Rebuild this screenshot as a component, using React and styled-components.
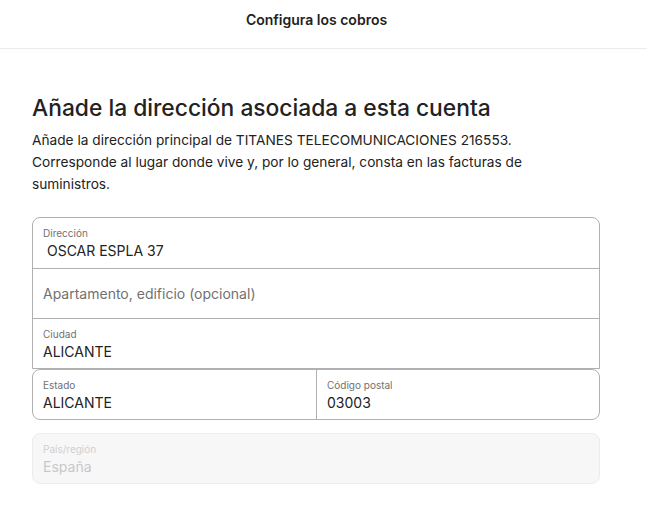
import styled, { createGlobalStyle } from 'styled-components';

const GlobalStyle = createGlobalStyle`
  body {
    margin: 0;
    background: #ffffff;
    font-family: Inter, "Noto Sans", sans-serif;
    color: #222222;
  }
`;

const Header = styled.header`
  height: 49px;
  display: flex;
  align-items: center;
  justify-content: center;
  border-bottom: 1px solid #ebebeb;
  font-size: 14px;
  font-weight: 600;
  padding: 0 14px 10px 0;
  box-sizing: border-box;
`;

const Main = styled.main`
  width: 568px;
  padding: 42px 32px 0 32px;
`;

const Title = styled.h1`
  margin: 0;
  font-size: 22.8px;
  font-weight: 500;
  line-height: 34px;
`;

const Lead = styled.p`
  margin: 4px 0 22px 0;
  font-size: 13.7px;
  line-height: 22px;
  color: #222222;
`;

const Group = styled.div`
  border: 1px solid #b0b0b0;
  border-radius: ${({ $bottom }) => ($bottom ? '8px' : '8px 8px 0 0')};
  display: ${({ $split }) => ($split ? 'grid' : 'block')};
  grid-template-columns: 1fr 1fr;
  overflow: hidden;
  & > * + * {
    ${({ $split }) =>
      $split ? 'border-left: 1px solid #b0b0b0;' : 'border-top: 1px solid #b0b0b0;'}
  }
`;

const Field = styled.div`
  height: ${({ $h }) => $h || 50}px;
  box-sizing: border-box;
  padding: ${({ $placeholder }) => ($placeholder ? '0 10px' : '8px 10px 0 10px')};
  display: flex;
  flex-direction: column;
  justify-content: ${({ $placeholder }) => ($placeholder ? 'center' : 'flex-start')};
`;

const Label = styled.span`
  font-size: 10px;
  line-height: 14px;
  color: ${({ $disabled }) => ($disabled ? '#d0d0d0' : '#717171')};
`;

const Value = styled.span`
  font-size: 14px;
  line-height: 22px;
  color: ${({ $disabled, $placeholder }) =>
    $disabled ? '#c8c8c8' : $placeholder ? '#717171' : '#222222'};
`;

const Disabled = styled.div`
  margin-top: 13px;
  height: 51px;
  box-sizing: border-box;
  padding: 8px 10px 0 10px;
  border: 1px solid #ececec;
  border-radius: 8px;
  background: #f7f7f7;
  display: flex;
  flex-direction: column;
`;

export default function App() {
  return (
    <>
      <GlobalStyle />
      <Header>Configura los cobros</Header>
      <Main>
        <Title>Añade la dirección asociada a esta cuenta</Title>
        <Lead>
          Añade la dirección principal de TITANES TELECOMUNICACIONES 216553.
          Corresponde al lugar donde vive y, por lo general, consta en las
          facturas de suministros.
        </Lead>
        <Group>
          <Field>
            <Label>Dirección</Label>
            <Value>&nbsp;OSCAR ESPLA 37</Value>
          </Field>
          <Field $placeholder>
            <Value $placeholder>Apartamento, edificio (opcional)</Value>
          </Field>
          <Field>
            <Label>Ciudad</Label>
            <Value>ALICANTE</Value>
          </Field>
        </Group>
        <Group $bottom $split>
          <Field $h={49}>
            <Label>Estado</Label>
            <Value>ALICANTE</Value>
          </Field>
          <Field $h={49}>
            <Label>Código postal</Label>
            <Value>03003</Value>
          </Field>
        </Group>
        <Disabled>
          <Label $disabled>País/región</Label>
          <Value $disabled>España</Value>
        </Disabled>
      </Main>
    </>
  );
}
